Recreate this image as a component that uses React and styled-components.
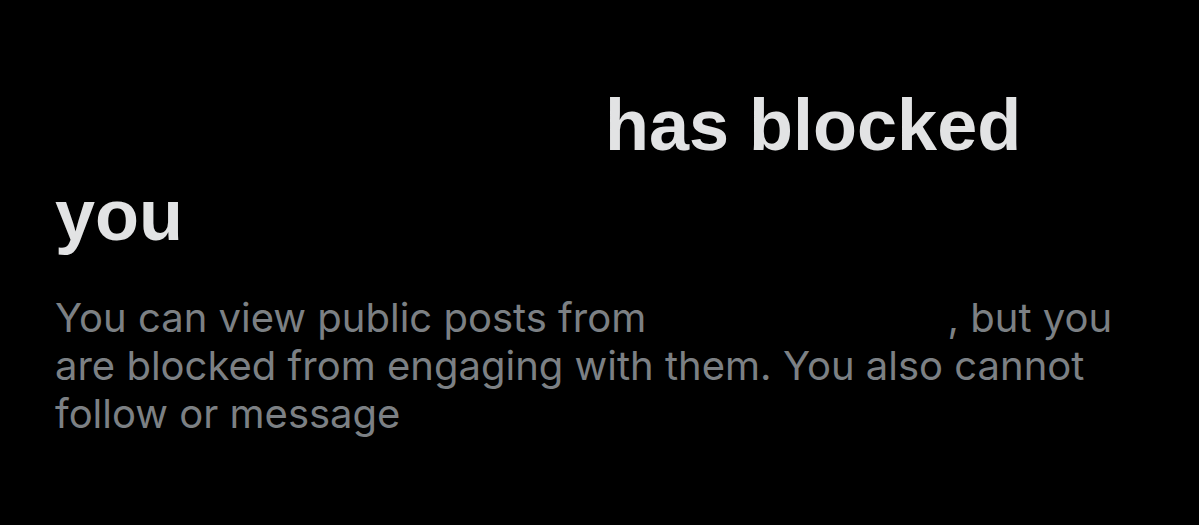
import styled, { createGlobalStyle } from "styled-components";

const GlobalStyle = createGlobalStyle`
  html, body {
    margin: 0;
    padding: 0;
    background: #000;
  }
`;

function App() {
  return (
    <>
      <GlobalStyle />
      <Page>
        <Title>
          <Name $w={530} /> has blocked you
        </Title>
        <Body>
          You can view public posts from <Name $w={290} />, but you are blocked
          from engaging with them. You also cannot follow or message{" "}
          <Name $w={190} />
        </Body>
      </Page>
    </>
  );
}

export default App;

const Page = styled.div`
  width: 1199px;
  height: 525px;
  box-sizing: border-box;
  padding: 80px 55px 0;
  background: #000;
  font-family: "Liberation Sans", Arial, sans-serif;
`;

const Title = styled.h1`
  margin: 0;
  font-size: 72px;
  line-height: 90px;
  font-weight: 700;
  color: #e2e3e4;
`;

// handle is hidden behind a black bar
const Name = styled.span`
  display: inline-block;
  width: ${(p) => p.$w}px;
`;

const Body = styled.p`
  margin: 34px 0 0;
  font-family: Inter, "Liberation Sans", sans-serif;
  font-size: 40px;
  line-height: 48px;
  font-weight: 400;
  color: #7c8084;
`;
